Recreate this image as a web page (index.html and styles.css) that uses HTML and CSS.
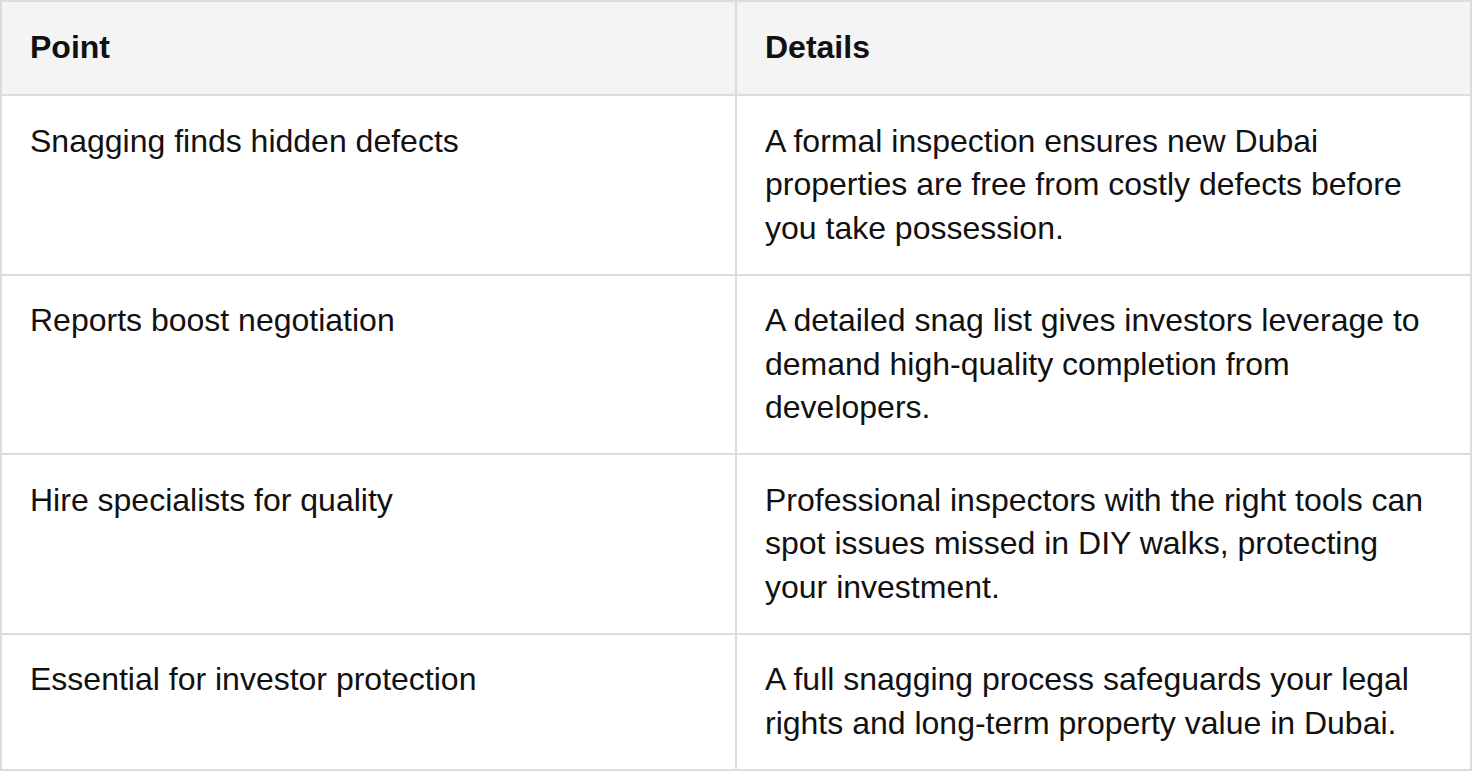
FILE: index.html
```html
<!DOCTYPE html>
<html lang="en">
<head>
<meta charset="utf-8">
<title>Snagging table</title>
<link rel="stylesheet" href="styles.css">
</head>
<body>
<table class="summary">
  <thead>
    <tr>
      <th>Point</th>
      <th>Details</th>
    </tr>
  </thead>
  <tbody>
    <tr>
      <td>Snagging finds hidden defects</td>
      <td>A formal inspection ensures new Dubai properties are free from costly defects before you take possession.</td>
    </tr>
    <tr>
      <td>Reports boost negotiation</td>
      <td>A detailed snag list gives investors leverage to demand high-quality completion from developers.</td>
    </tr>
    <tr>
      <td>Hire specialists for quality</td>
      <td>Professional inspectors with the right tools can spot issues missed in DIY walks, protecting your investment.</td>
    </tr>
    <tr>
      <td>Essential for investor protection</td>
      <td>A full snagging process safeguards your legal rights and long-term property value in Dubai.</td>
    </tr>
  </tbody>
</table>
</body>
</html>
```
FILE: styles.css
```css
html, body {
  margin: 0;
  padding: 0;
  background: #ffffff;
}

body {
  font-family: "Liberation Sans", Arial, Helvetica, sans-serif;
  color: #111111;
}

.summary {
  width: 1472px;
  border-collapse: collapse;
  table-layout: fixed;
  font-size: 32px;
  line-height: 43.5px;
}

.summary th,
.summary td {
  width: 50%;
  border: 2px solid #dcdcdc;
  text-align: left;
  vertical-align: top;
  padding: 23.5px 28px;
}

.summary th {
  background: #f4f4f4;
  font-weight: bold;
  padding-top: 24.25px;
  padding-bottom: 24.25px;
}
```
